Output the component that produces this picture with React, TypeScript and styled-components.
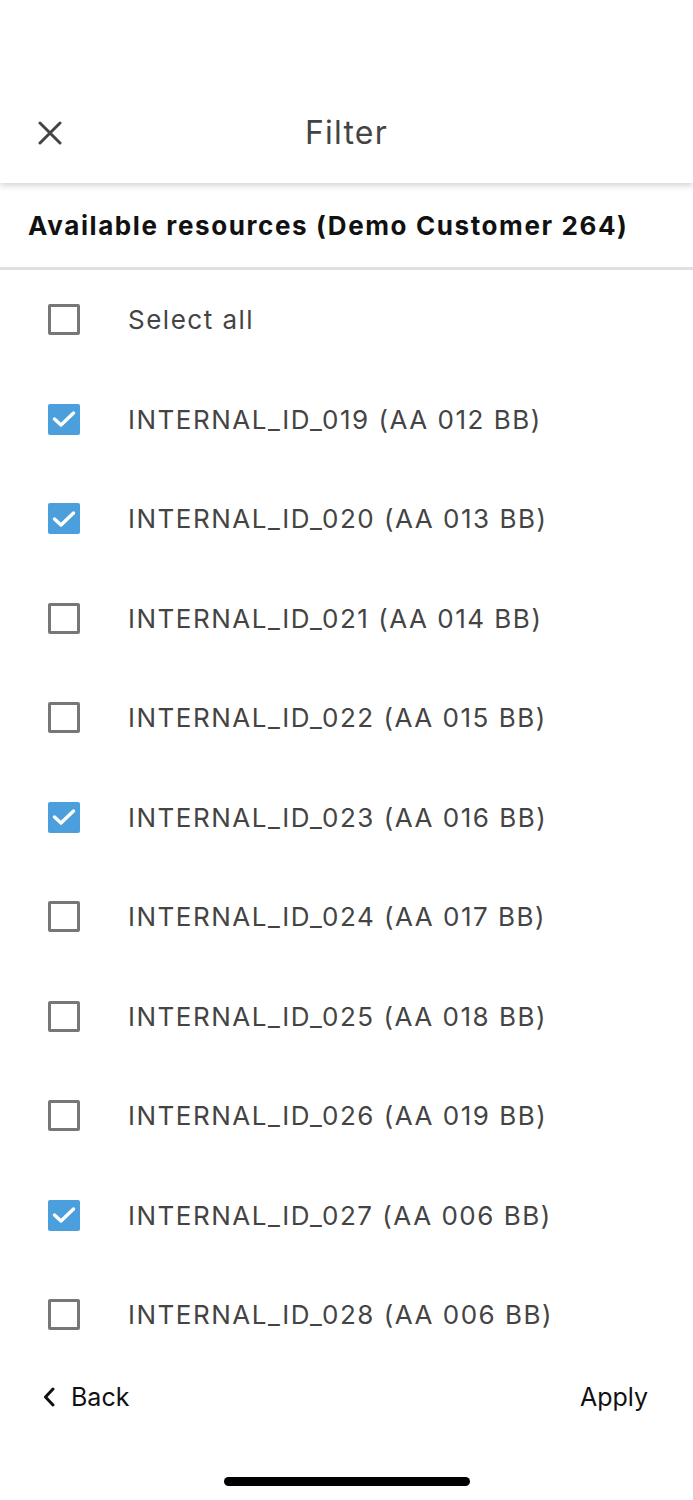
import React from "react";
import styled, { createGlobalStyle } from "styled-components";

const Global = createGlobalStyle`
  html, body { margin: 0; padding: 0; background: #ffffff; }
  body { font-family: Inter, Roboto, "Noto Sans", Arial, sans-serif; -webkit-font-smoothing: antialiased; }
`;

const Page = styled.div`
  width: 693px;
  height: 1500px;
  display: flex;
  flex-direction: column;
  background: #fff;
  overflow: hidden;
`;

const Header = styled.header`
  height: 183px;
  box-sizing: border-box;
  padding-top: 100px;
  display: grid;
  grid-template-columns: 100px 1fr 100px;
  align-items: start;
  background: #fff;
  box-shadow: 0 3px 6px rgba(0, 0, 0, 0.16);
  position: relative;
  z-index: 1;
  flex-shrink: 0;
`;

const CloseBtn = styled.button`
  border: 0;
  background: none;
  padding: 0 0 0 38px;
  margin: 0;
  height: 66px;
  display: flex;
  align-items: center;
  cursor: pointer;
`;

const Title = styled.h1`
  margin: 0;
  text-align: center;
  font-size: 32px;
  font-weight: 400;
  letter-spacing: 1.2px;
  color: #444;
  line-height: 66px;
  height: 66px;
`;

const SectionTitle = styled.h2`
  margin: 0;
  padding: 0 28px;
  height: 84px;
  display: flex;
  align-items: center;
  font-size: 26px;
  font-weight: 700;
  letter-spacing: 1.6px;
  color: #111;
  border-bottom: 3px solid #e0e0e0;
  flex-shrink: 0;
`;

const List = styled.ul`
  list-style: none;
  margin: 0;
  padding: 0;
`;

const Row = styled.li`
  height: 99.5px;
  display: flex;
  align-items: center;
  padding-left: 48px;
`;

const Box = styled.span<{ $checked: boolean }>`
  width: 32px;
  height: 31px;
  box-sizing: border-box;
  border-radius: 2px;
  border: ${(p) => (p.$checked ? "none" : "3.5px solid #777")};
  background: ${(p) => (p.$checked ? "#4a9fdc" : "#fff")};
  display: flex;
  align-items: center;
  justify-content: center;
  flex-shrink: 0;
`;

const Label = styled.span`
  margin-left: 48px;
  font-size: 26px;
  letter-spacing: 1.5px;
  color: #444;
`;

const Footer = styled.footer`
  display: flex;
  justify-content: space-between;
  align-items: center;
  padding: 0 45px 0 43px;
  height: 56px;
  margin-top: 4px;
  flex-shrink: 0;
`;

const FooterBtn = styled.button`
  border: 0;
  background: none;
  padding: 0;
  display: flex;
  align-items: center;
  gap: 16px;
  font-family: Inter, Roboto, "Noto Sans", Arial, sans-serif;
  font-size: 25px;
  color: #111;
  cursor: pointer;
`;

const HomeBar = styled.div`
  margin: 52px auto 0;
  width: 246px;
  height: 9px;
  border-radius: 5px;
  background: #000;
  flex-shrink: 0;
`;

const items: [string, boolean][] = [
  ["INTERNAL_ID_019 (AA 012 BB)", true],
  ["INTERNAL_ID_020 (AA 013 BB)", true],
  ["INTERNAL_ID_021 (AA 014 BB)", false],
  ["INTERNAL_ID_022 (AA 015 BB)", false],
  ["INTERNAL_ID_023 (AA 016 BB)", true],
  ["INTERNAL_ID_024 (AA 017 BB)", false],
  ["INTERNAL_ID_025 (AA 018 BB)", false],
  ["INTERNAL_ID_026 (AA 019 BB)", false],
  ["INTERNAL_ID_027 (AA 006 BB)", true],
  ["INTERNAL_ID_028 (AA 006 BB)", false],
];

const Check = () => (
  <svg width="26" height="18" viewBox="0 0 26 18" fill="none">
    <path d="M3.5 9 L10 15 L22.5 3" stroke="#fff" strokeWidth="3.4" strokeLinecap="round" strokeLinejoin="round" />
  </svg>
);

export default function App() {
  return (
    <Page>
      <Global />
      <Header>
        <CloseBtn aria-label="Close">
          <svg width="24" height="24" viewBox="0 0 24 24">
            <path d="M2 2 L22 22 M22 2 L2 22" stroke="#444" strokeWidth="3" strokeLinecap="round" />
          </svg>
        </CloseBtn>
        <Title>Filter</Title>
        <div />
      </Header>
      <SectionTitle>Available resources (Demo Customer 264)</SectionTitle>
      <List>
        <Row>
          <Box $checked={false} />
          <Label>Select all</Label>
        </Row>
        {items.map(([t, c]) => (
          <Row key={t}>
            <Box $checked={c}>{c && <Check />}</Box>
            <Label>{t}</Label>
          </Row>
        ))}
      </List>
      <Footer>
        <FooterBtn>
          <svg width="12" height="20" viewBox="0 0 12 20">
            <path d="M10 2 L2.5 10 L10 18" stroke="#111" strokeWidth="3" fill="none" strokeLinecap="round" strokeLinejoin="round" />
          </svg>
          Back
        </FooterBtn>
        <FooterBtn>Apply</FooterBtn>
      </Footer>
      <HomeBar />
    </Page>
  );
}
